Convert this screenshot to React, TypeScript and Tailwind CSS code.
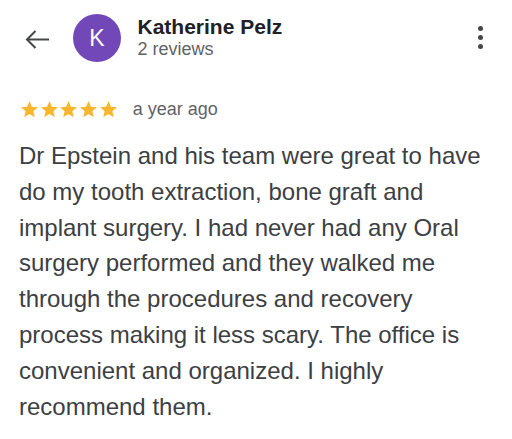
export default function App() {
  const stars = [0, 1, 2, 3, 4];
  return (
    <main
      className="w-[512px] h-[439px] bg-white pl-[19px] pr-[29px] overflow-hidden"
      style={{ fontFamily: '"Liberation Sans", Arial, sans-serif' }}
    >
      {/* Header */}
      <div className="flex items-start pt-[14px]">
        <button className="ml-[6px] mt-[16px] text-[#444746]">
          <svg width="24" height="19" viewBox="0 0 24 19" fill="none" stroke="currentColor" strokeWidth="2">
            <path d="M24 9.5H2" />
            <path d="M10.5 1L2 9.5L10.5 18" />
          </svg>
        </button>
        <div className="ml-[24px] grid h-[48px] w-[48px] place-items-center rounded-full bg-[#7248b9] text-[23px] text-white">
          K
        </div>
        <div className="ml-[16.5px] flex flex-col">
          <span className="text-[21px] leading-[25px] font-bold text-[#202124]">Katherine Pelz</span>
          <span className="text-[18px] leading-[20px] text-[#5f6368]">2 reviews</span>
        </div>
        <div className="ml-auto mt-[12px] flex flex-col gap-[4px]">
          <span className="h-[5px] w-[5px] rounded-full bg-[#444746]" />
          <span className="h-[5px] w-[5px] rounded-full bg-[#444746]" />
          <span className="h-[5px] w-[5px] rounded-full bg-[#444746]" />
        </div>
      </div>

      {/* Rating */}
      <div className="mt-[37px] flex h-[20px] items-center">
        <div className="ml-[2px] flex gap-[2.7px]">
          {stars.map((i) => (
            <svg key={i} width="17" height="16.4" viewBox="2 2 20 19.27" fill="#f8b52e">
              <path d="M12 17.27L18.18 21l-1.64-7.03L22 9.24l-7.19-.61L12 2 9.19 8.63 2 9.24l5.46 4.73L5.82 21z" />
            </svg>
          ))}
        </div>
        <span className="ml-[16px] text-[18px] leading-[20px] text-[#5f6368]">a year ago</span>
      </div>

      {/* Review body */}
      <p className="mt-[19px] w-[470px] text-[24px] leading-[35.8px] text-[#3c4043]">
        Dr Epstein and his team were great to have do my tooth extraction, bone graft and implant surgery. I had never
        had any Oral surgery performed and they walked me through the procedures and recovery process making it less
        scary. The office is convenient and organized. I highly recommend them.
      </p>
    </main>
  );
}
